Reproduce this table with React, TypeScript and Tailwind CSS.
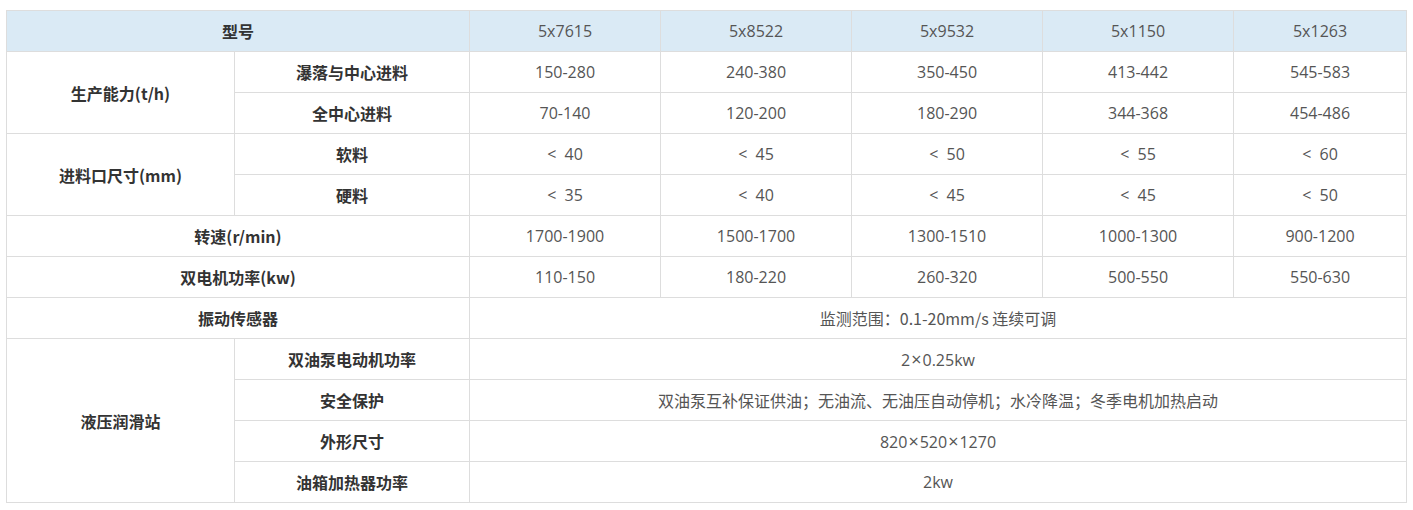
const models = ['5x7615', '5x8522', '5x9532', '5x1150', '5x1263'];

const numFont = "font-['Open_Sans','Noto_Sans_CJK_SC',sans-serif]";
const cjkFont = "font-['Noto_Sans_CJK_SC',sans-serif]";

const td = 'border border-[#dddddd] text-center align-middle p-0';
const label = `${td} font-bold text-[#333333] ${cjkFont}`;
const cell = `${td} font-normal text-[#555555] ${numFont}`;
const wide = `${td} font-normal text-[#555555] ${cjkFont}`;

const Values: React.FC<{ items: string[] }> = ({ items }) => (
	<>
		{items.map((v, i) => (
			<td key={i} className={cell}>
				{v}
			</td>
		))}
	</>
);

// less-than values have a wider gap in the source table
const lt = (n: number) => '<\u00a0\u00a0' + n;

const Times = () => <span className="px-px text-[18px]">×</span>;

export default function App() {
	return (
		<div className="bg-white w-[1413px] h-[510px] pt-[10px] pl-[6px]">
			<table className="table-fixed border-collapse w-[1400px] text-[16px] leading-none">
				<colgroup>
					<col className="w-[228px]" />
					<col className="w-[235px]" />
					<col className="w-[191px]" />
					<col className="w-[191px]" />
					<col className="w-[191px]" />
					<col className="w-[191px]" />
					<col className="w-[173px]" />
				</colgroup>
				<tbody>
					<tr className="h-[41px] bg-[#daeaf5]">
						<td colSpan={2} className={label}>
							型号
						</td>
						<Values items={models} />
					</tr>
					<tr className="h-[41px]">
						<td rowSpan={2} className={label}>
							生产能力(t/h)
						</td>
						<td className={label}>瀑落与中心进料</td>
						<Values items={['150-280', '240-380', '350-450', '413-442', '545-583']} />
					</tr>
					<tr className="h-[41px]">
						<td className={label}>全中心进料</td>
						<Values items={['70-140', '120-200', '180-290', '344-368', '454-486']} />
					</tr>
					<tr className="h-[41px]">
						<td rowSpan={2} className={label}>
							进料口尺寸(mm)
						</td>
						<td className={label}>软料</td>
						<Values items={[lt(40), lt(45), lt(50), lt(55), lt(60)]} />
					</tr>
					<tr className="h-[41px]">
						<td className={label}>硬料</td>
						<Values items={[lt(35), lt(40), lt(45), lt(45), lt(50)]} />
					</tr>
					<tr className="h-[41px]">
						<td colSpan={2} className={label}>
							转速(r/min)
						</td>
						<Values items={['1700-1900', '1500-1700', '1300-1510', '1000-1300', '900-1200']} />
					</tr>
					<tr className="h-[41px]">
						<td colSpan={2} className={label}>
							双电机功率(kw)
						</td>
						<Values items={['110-150', '180-220', '260-320', '500-550', '550-630']} />
					</tr>
					<tr className="h-[41px]">
						<td colSpan={2} className={label}>
							振动传感器
						</td>
						<td colSpan={5} className={wide}>
							监测范围：0.1-20mm/s 连续可调
						</td>
					</tr>
					<tr className="h-[41px]">
						<td rowSpan={4} className={label}>
							液压润滑站
						</td>
						<td className={label}>双油泵电动机功率</td>
						<td colSpan={5} className={cell}>
							2<Times />0.25kw
						</td>
					</tr>
					<tr className="h-[41px]">
						<td className={label}>安全保护</td>
						<td colSpan={5} className={wide}>
							双油泵互补保证供油；无油流、无油压自动停机；水冷降温；冬季电机加热启动
						</td>
					</tr>
					<tr className="h-[41px]">
						<td className={label}>外形尺寸</td>
						<td colSpan={5} className={cell}>
							820<Times />520<Times />1270
						</td>
					</tr>
					<tr className="h-[41px]">
						<td className={label}>油箱加热器功率</td>
						<td colSpan={5} className={cell}>
							2kw
						</td>
					</tr>
				</tbody>
			</table>
		</div>
	);
}
